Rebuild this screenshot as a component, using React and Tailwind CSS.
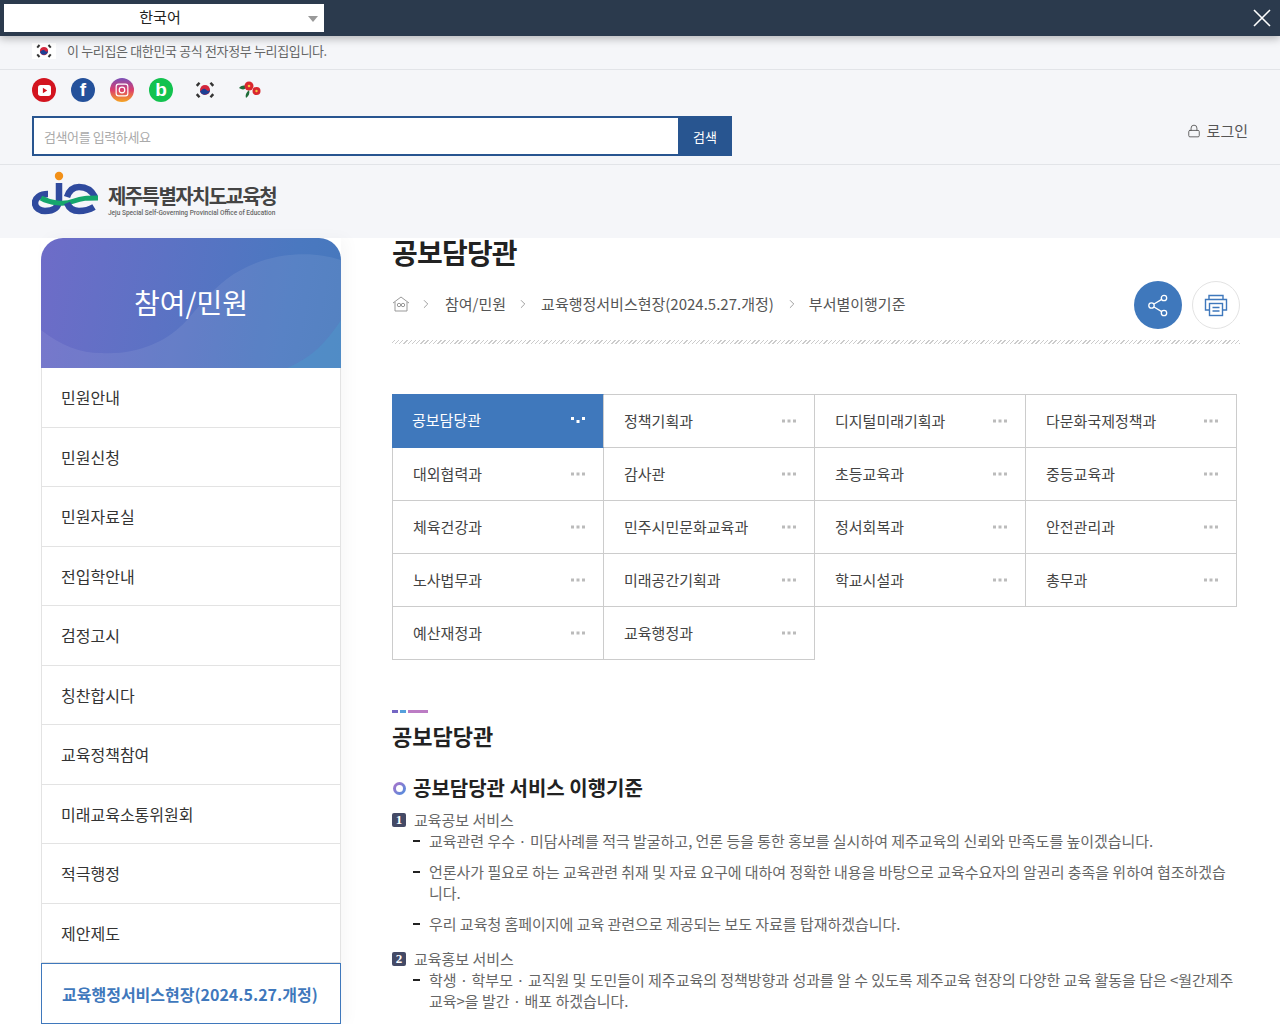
import { ChevronRight, Lock } from "lucide-react";

const FONT = "font-['Noto_Sans_CJK_KR','Noto_Sans',sans-serif]";

const sideMenu = [
  "민원안내",
  "민원신청",
  "민원자료실",
  "전입학안내",
  "검정고시",
  "칭찬합시다",
  "교육정책참여",
  "미래교육소통위원회",
  "적극행정",
  "제안제도",
];

const depts = [
  "공보담당관", "정책기획과", "디지털미래기획과", "다문화국제정책과",
  "대외협력과", "감사관", "초등교육과", "중등교육과",
  "체육건강과", "민주시민문화교육과", "정서회복과", "안전관리과",
  "노사법무과", "미래공간기획과", "학교시설과", "총무과",
  "예산재정과", "교육행정과",
];

function Taegeuk({ size = 20 }) {
  return (
    <svg width={size} height={size} viewBox="0 0 24 24">
      <circle cx="12" cy="12" r="5.5" fill="#d3263c" />
      <path d="M6.6 13a5.5 5.5 0 0 0 10.8 -1.2c-1.2 1.8-3.2 1.2-3.9 0.2-1-1.5-3.5-2-4.6-.6-.9 1.1-1.6 1.6-2.3 1.6z" fill="#1d3f94" />
      <g stroke="#333" strokeWidth="2.6">
        <path d="M3 7.5l3-3.5" />
        <path d="M18 4l3 3.5" />
        <path d="M3 16.5l3 3.5" />
        <path d="M18 20l3-3.5" />
      </g>
    </svg>
  );
}

function Dots({ active }) {
  if (active) {
    return (
      <svg width="14" height="8" viewBox="0 0 14 8" className="fill-white">
        <rect x="0" y="1" width="3" height="3" />
        <rect x="5.5" y="4" width="3" height="3" />
        <rect x="11" y="1" width="3" height="3" />
      </svg>
    );
  }
  return (
    <svg width="14" height="4" viewBox="0 0 14 4" className="fill-[#bbb]">
      <rect x="0" y="0.5" width="3" height="3" />
      <rect x="5.5" y="0.5" width="3" height="3" />
      <rect x="11" y="0.5" width="3" height="3" />
    </svg>
  );
}

function Logo() {
  return (
    <svg width="68" height="48" viewBox="0 0 68 48" fill="none">
      <circle cx="27" cy="6" r="4.2" fill="#f29018" />
      <path d="M16 24C8 24 3 28 3 33c0 5 5 8 10 8 9 0 14-4 14-11V13" stroke="#2f4a9e" strokeWidth="6.5" />
      <path d="M35 27c2-6 6-10 12-10 8 0 13 4 16 10" stroke="#2f4a9e" strokeWidth="6.5" />
      <path d="M9 28c9 5 23 7 33 3 8-3 13-3 24-3" stroke="#15a66c" strokeWidth="5" />
      <path d="M35 33c2 5 6 8 12 8 6 0 10-1 15-4" stroke="#2f4a9e" strokeWidth="6.5" />
    </svg>
  );
}

function Flower() {
  return (
    <svg width="22" height="18" viewBox="0 0 22 18">
      <path d="M0 7c3-3 6-3 8-1-2 3-5 3-8 1zM7 17c-1-3 0-5 3-8 1 3 0 6-3 8z" fill="#1f6d3a" />
      <circle cx="10" cy="5" r="4.5" fill="#d9272e" />
      <circle cx="17.5" cy="10" r="4" fill="#d9272e" />
      <circle cx="10" cy="5" r="1.3" fill="#f6c445" />
      <circle cx="17.5" cy="10" r="1.2" fill="#f6c445" />
    </svg>
  );
}

function Header() {
  return (
    <header className="bg-[#f5f6f9]">
      <div className="h-[36px] bg-[#2b3a4d] flex items-center justify-between pl-[4px] pr-[9px] shadow-[0_3px_8px_rgba(0,0,0,0.25)] relative">
        <div className="w-[320px] h-[28px] bg-white relative flex items-center justify-center pr-[8px] pb-[2px] text-[15px] text-[#222]">
          한국어
          <span className="absolute right-[6px] top-[12px] w-0 h-0 border-x-[5px] border-x-transparent border-t-[6px] border-t-[#999]" />
        </div>
        <svg width="18" height="18" viewBox="0 0 18 18" stroke="#fff" strokeWidth="1.6">
          <path d="M1 1l16 16M17 1L1 17" />
        </svg>
      </div>
      <div className="h-[34px] border-b border-[#e2e4e8] pl-[32px] pb-[3px] flex items-center gap-[11px] text-[13px] tracking-[-0.35px] text-[#666]">
        <span className="w-[24px] h-[16px] bg-white flex items-center justify-center">
          <Taegeuk size={18} />
        </span>
        이 누리집은 대한민국 공식 전자정부 누리집입니다.
      </div>
      <div className="pl-[32px] pt-[8px] flex items-center h-[32px]">
        <div className="flex items-center gap-[15px]">
          <span className="w-[24px] h-[24px] rounded-full bg-[#d3141f] flex items-center justify-center">
            <svg width="13" height="11" viewBox="0 0 12 10"><rect width="12" height="10" rx="2.5" fill="#fff" /><path d="M4.5 2.5v5l4-2.5z" fill="#d3141f" /></svg>
          </span>
          <span className="w-[24px] h-[24px] rounded-full bg-[#24519b] flex items-center justify-center text-white font-bold text-[19px] font-['Liberation_Sans',sans-serif]">f</span>
          <span className="w-[24px] h-[24px] rounded-full bg-[linear-gradient(to_top,#f5a623,#dc3d6c_50%,#7a50b8)] flex items-center justify-center">
            <svg width="14" height="14" viewBox="0 0 12 12" fill="none" stroke="#fff" strokeWidth="1"><rect x="1" y="1" width="10" height="10" rx="2" /><circle cx="6" cy="6" r="2.4" /></svg>
          </span>
          <span className="w-[24px] h-[24px] rounded-full bg-[#12c24f] flex items-center justify-center text-white font-bold text-[19px] font-['Liberation_Sans',sans-serif]">b</span>
        </div>
        <span className="ml-[20px] w-[24px] h-[24px] flex items-center justify-center">
          <Taegeuk size={22} />
        </span>
        <span className="ml-[22px] flex"><Flower /></span>
      </div>
      <div className="h-[63px] border-b border-[#e2e4e8] pl-[32px] pr-[32px] pt-[14px] flex justify-between items-start">
        <div className="flex">
          <div className="w-[646px] h-[40px] bg-white border-2 border-r-0 border-[#285590] flex items-center pl-[10px] pt-[2px] text-[13px] tracking-[-0.4px] text-[#aaa]">
            검색어를 입력하세요
          </div>
          <div className="w-[54px] h-[40px] bg-[#285590] text-white text-[13px] pt-[2px] flex items-center justify-center">
            검색
          </div>
        </div>
        <div className="flex items-center gap-[6px] text-[15px] text-[#555] mt-[4px]">
          <Lock size={14} strokeWidth={1.5} />
          로그인
        </div>
      </div>
      <div className="h-[73px] pl-[32px] pt-[5px] flex items-start gap-[8px]">
        <Logo />
        <div className="pt-[13px] flex flex-col">
          <span className="text-[20px] leading-[26px] font-bold tracking-[-1.6px] text-[#444]">제주특별자치도교육청</span>
          <span className="text-[6.5px] leading-[9px] font-medium text-[#666] font-['Roboto',sans-serif]">Jeju Special Self-Governing Provincial Office of Education</span>
        </div>
      </div>
    </header>
  );
}

function Sidebar() {
  return (
    <aside className="w-[300px] ml-[41px] shrink-0 shadow-[6px_0_14px_rgba(0,0,0,0.03)]">
      <div className="relative overflow-hidden h-[130px] rounded-t-[22px] bg-[linear-gradient(100deg,#6e6cc8,#4a78c0_80%,#4678bc)] flex items-center justify-center pb-[2px] text-white text-[28px]">
        <svg className="absolute inset-0" width="300" height="130" viewBox="0 0 300 130">
          <path d="M0 92C20 108 40 115 60 115 95 117 125 105 146 82 165 60 180 42 200 32 230 15 270 12 300 22V130H0z" fill="#fff" fillOpacity="0.08" />
          <path d="M246 130C270 120 285 105 300 82V130z" fill="#4a9ccc" fillOpacity="0.4" />
        </svg>
        <span className="relative">참여/민원</span>
      </div>
      <ul className="bg-white border-x border-[#e3e3e3]">
        {sideMenu.map((m) => (
          <li key={m} className="h-[59.5px] border-b border-[#e3e3e3] pl-[19px] flex items-center text-[16px] text-[#333]">
            {m}
          </li>
        ))}
      </ul>
      <div className="h-[61px] border border-[#3f78bc] pl-[20px] flex items-center text-[16px] font-bold text-[#3f78bc] bg-white">
        교육행정서비스현장(2024.5.27.개정)
      </div>
    </aside>
  );
}

function Breadcrumb() {
  const sep = <ChevronRight size={14} strokeWidth={1.2} className="text-[#777]" />;
  return (
    <div className="flex items-center justify-between h-[48px]">
      <div className="flex items-center text-[15px] text-[#555] mb-[2px]">
        <svg width="18" height="16" viewBox="0 0 18 16" fill="none" stroke="#999" strokeWidth="1">
          <path d="M1 7l8-6 8 6M3 6v9h12V6" />
          <circle cx="7" cy="9" r="1.7" />
          <circle cx="11" cy="9" r="1.7" />
        </svg>
        <span className="ml-[9px] mr-[12px]">{sep}</span>
        참여/민원
        <span className="ml-[10px] mr-[11px]">{sep}</span>
        교육행정서비스현장(2024.5.27.개정)
        <span className="ml-[11px] mr-[10px]">{sep}</span>
        부서별이행기준
      </div>
      <div className="flex gap-[10px]">
        <span className="w-[48px] h-[48px] rounded-full bg-[#3f78bc] flex items-center justify-center">
          <svg width="22" height="24" viewBox="0 0 22 24" fill="none" stroke="#fff" strokeWidth="1.3">
            <circle cx="17" cy="5" r="2.7" />
            <circle cx="4.5" cy="12.5" r="2.7" />
            <circle cx="17" cy="20" r="2.7" />
            <path d="M7 11l7.7-4.6M7 14l7.7 4.6" />
          </svg>
        </span>
        <span className="w-[48px] h-[48px] rounded-full bg-white border border-[#e3e3e3] flex items-center justify-center">
          <svg width="24" height="24" viewBox="0 0 24 24" fill="none" stroke="#3f78bc" strokeWidth="1.4">
            <path d="M5 6V2.5h14V6" />
            <path d="M5.5 17H1.5V6.5h21V17h-4" />
            <rect x="5.5" y="10.5" width="13" height="12" />
            <path d="M8.5 14.5h7M8.5 18h7" />
          </svg>
        </span>
      </div>
    </div>
  );
}

function DeptGrid() {
  return (
    <div className="grid grid-cols-[212px_211px_211px_211px] w-[845px] mt-[50px]">
      {depts.map((d, i) => {
        const active = i === 0;
        return (
          <div
            key={d}
            className={`flex items-center justify-between pr-[18px] text-[15px] border-b border-r border-[#ccc] ${
              i % 4 === 0 ? "border-l" : ""
            } ${i < 4 ? "border-t h-[54px]" : "h-[53px]"} ${
              active
                ? "bg-[#3f78bc] text-white border-l-[#3f78bc] border-t-[#3f78bc] border-b-[#3f78bc] pl-[19px] pb-[2px]"
                : "bg-white text-[#444] pl-[20px]"
            }`}
          >
            {d}
            <Dots active={active} />
          </div>
        );
      })}
    </div>
  );
}

function Bullet({ children }) {
  return (
    <li className="flex mb-[10px]">
      <span className="w-[7px] h-[2px] bg-[#222] mt-[10px] ml-[21px] mr-[9px] shrink-0" />
      <span>{children}</span>
    </li>
  );
}

function NumberTag({ n }) {
  return (
    <span className="w-[14px] h-[14px] mr-[8px] rounded-[2px] bg-[#444a66] text-white text-[13px] font-bold flex items-center justify-center font-['Liberation_Serif',serif]">
      {n}
    </span>
  );
}

function Content() {
  return (
    <div className="mt-[50px]">
      <div className="flex gap-[2px] h-[3px]">
        <span className="w-[6px] bg-[#7466c4]" />
        <span className="w-[6px] bg-[#55a0dc]" />
        <span className="w-[20px] bg-[#bc7cc4]" />
      </div>
      <h3 className="text-[22px] leading-[32px] font-bold text-[#222] mt-[6px]">공보담당관</h3>
      <h4 className="flex items-center mt-[22px] text-[20px] leading-[30px] font-bold text-[#222]">
        <span className="w-[13px] h-[13px] ml-[1px] mr-[7px] rounded-full p-[3px] bg-[linear-gradient(135deg,#b070c8,#4a90e0)]">
          <span className="block w-full h-full rounded-full bg-white" />
        </span>
        공보담당관 서비스 이행기준
      </h4>
      <div className="text-[15px] leading-[21px] tracking-[-0.03px] text-[#666] pr-[4px]">
        <div className="flex items-center mt-[6px] h-[21px]"><NumberTag n="1" />교육공보 서비스</div>
        <ul>
          <Bullet>교육관련 우수 · 미담사례를 적극 발굴하고, 언론 등을 통한 홍보를 실시하여 제주교육의 신뢰와 만족도를 높이겠습니다.</Bullet>
          <Bullet>언론사가 필요로 하는 교육관련 취재 및 자료 요구에 대하여 정확한 내용을 바탕으로 교육수요자의 알권리 충족을 위하여 협조하겠습니다.</Bullet>
          <Bullet>우리 교육청 홈페이지에 교육 관련으로 제공되는 보도 자료를 탑재하겠습니다.</Bullet>
        </ul>
        <div className="flex items-center mt-[14px] h-[21px]"><NumberTag n="2" />교육홍보 서비스</div>
        <ul>
          <Bullet>학생 · 학부모 · 교직원 및 도민들이 제주교육의 정책방향과 성과를 알 수 있도록 제주교육 현장의 다양한 교육 활동을 담은 &lt;월간제주교육&gt;을 발간 · 배포 하겠습니다.</Bullet>
        </ul>
      </div>
    </div>
  );
}

export default function App() {
  return (
    <div className={`${FONT} h-[1024px] overflow-hidden bg-white`}>
      <Header />
      <div className="flex">
        <Sidebar />
        <main className="ml-[51px] w-[848px]">
          <h2 className="text-[28px] leading-[32px] font-bold tracking-[-0.8px] text-[#222] -mt-[2px]">공보담당관</h2>
          <div className="mt-[13px]"><Breadcrumb /></div>
          <div className="h-[4px] mt-[11px] bg-[repeating-linear-gradient(-45deg,#ccc_0,#ccc_1px,transparent_1px,transparent_3px)]" />
          <DeptGrid />
          <Content />
        </main>
      </div>
    </div>
  );
}
